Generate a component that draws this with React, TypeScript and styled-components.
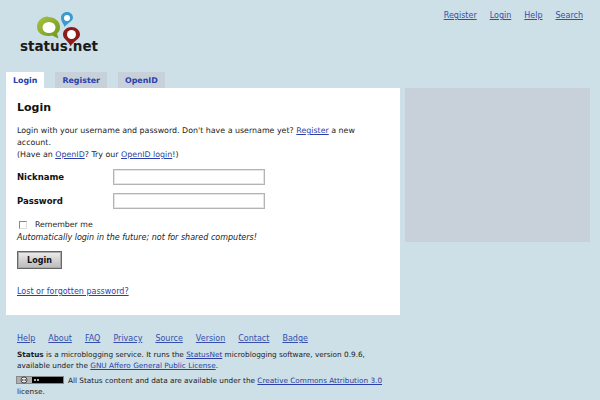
import React from "react";
import styled, { createGlobalStyle } from "styled-components";

const GlobalStyle = createGlobalStyle`
  html, body {
    margin: 0;
    padding: 0;
    background: #cddfe7;
  }
  body {
    width: 600px;
    height: 400px;
    overflow: hidden;
    font-family: "DejaVu Sans", sans-serif;
    font-size: 8px;
    line-height: 12px;
    color: #222;
  }
  a {
    color: #2a3fa8;
    text-decoration: underline;
  }
`;

const Page = styled.div`
  width: 600px;
  height: 400px;
  overflow: hidden;
`;

const Header = styled.header`
  height: 72px;
  display: flex;
  justify-content: space-between;
  align-items: flex-start;
  padding: 0 17px 0 20px;
`;

const LogoLink = styled.div`
  margin-top: 12px;
  width: 84px;
  height: 42px;
  display: flex;
  flex-direction: column;
  align-items: flex-start;
`;

const LogoText = styled.span`
  font-weight: 700;
  font-size: 13.5px;
  line-height: 14px;
  color: #1a1a1a;
  margin-top: -9px;
`;

const TopNav = styled.nav`
  margin-top: 10px;
  display: flex;
  gap: 13px;
  a {
    color: #3450ae;
  }
`;

const Tabs = styled.div`
  display: flex;
  gap: 11px;
  padding-left: 6px;
  height: 16px;
`;

const Tab = styled.a<{ $active?: boolean }>`
  display: block;
  height: 16px;
  padding: 0 7px;
  font-size: 7.9px;
  line-height: 17px;
  font-weight: 700;
  text-decoration: none;
  color: #2a3fa8;
  background: ${(p) => (p.$active ? "#fff" : "#c8d1d9")};
`;

const Columns = styled.div`
  display: flex;
  align-items: flex-start;
  gap: 5px;
  padding-left: 6px;
`;

const Main = styled.main`
  width: 394px;
  height: 227px;
  box-sizing: border-box;
  background: #fff;
  padding: 12px 11px 0;
`;

const Aside = styled.aside`
  width: 185px;
  height: 154px;
  background: #c8d1d9;
`;

const Title = styled.h1`
  margin: 0 0 9px;
  font-size: 11px;
  line-height: 16px;
  font-weight: 700;
  color: #111;
`;

const Intro = styled.p`
  margin: 0 0 8px;
  font-size: 7.9px;
`;

const FieldRow = styled.div`
  display: flex;
  align-items: center;
  height: 16px;
  margin-bottom: 8px;
`;

const FieldLabel = styled.label`
  width: 96px;
  font-size: 8.5px;
  font-weight: 700;
  color: #111;
`;

const TextInput = styled.input`
  width: 152px;
  height: 16px;
  box-sizing: border-box;
  border: 1px solid #b4b4b4;
  box-shadow: inset 0 0 0 1px #e4e4e4;
  background: #fff;
  padding: 0 2px;
  margin: 0;
`;

const CheckRow = styled.div`
  display: flex;
  align-items: center;
  height: 12px;
  margin-top: 10px;
  gap: 8px;
  padding-left: 2px;
  font-size: 7.8px;
`;

const CheckBox = styled.span`
  width: 6px;
  height: 6px;
  border-top: 1px solid #888;
  border-left: 1px solid #888;
  border-right: 1px solid #ddd;
  border-bottom: 1px solid #ddd;
`;

const Hint = styled.p`
  margin: 1px 0 0;
  font-style: italic;
`;

const SubmitButton = styled.button`
  display: block;
  width: 45px;
  height: 18px;
  margin: 7px 0 17px;
  padding: 0;
  box-sizing: border-box;
  border: 1px solid #666;
  box-shadow: inset 0 0 0 1px #aaa;
  background: linear-gradient(#eee, #d4d4d4 45%, #bbb);
  font-family: inherit;
  font-size: 8px;
  font-weight: 700;
  color: #111;
`;

const Footer = styled.footer`
  padding: 18px 17px 0;
`;

const FooterNav = styled.nav`
  display: flex;
  gap: 13px;
  margin-bottom: 4px;
  a {
    color: #3450ae;
  }
`;

const FooterText = styled.p`
  margin: 0 0 4px;
  width: 370px;
  font-size: 7.3px;
  line-height: 11px;
`;

const LicenseBadge = styled.svg`
  display: inline-block;
  width: 48px;
  height: 8px;
  margin: 0 4px 0 -1px;
  vertical-align: -1px;
`;

const Logo = () => (
  <svg width="62" height="36" viewBox="20 12 62 36" style={{ display: "block" }}>
    <defs>
      <linearGradient id="bubble" x1="0" y1="0" x2="1" y2="1">
        <stop offset="0" stopColor="#a8c43c" />
        <stop offset="1" stopColor="#6f9422" />
      </linearGradient>
    </defs>
    <path d="M48 17c7 0 12 4.500 12 10 0 3-1 5-3 6.500l1.500 5-6.500-3c-1.500.4-2.500.5-4 .5-5 0-11-3-11-9s5-10.500 11-10.500z" fill="url(#bubble)" />
    <ellipse cx="49" cy="27.500" rx="6.500" ry="5.500" fill="#fff" />
    <path d="M67 12c3.500 0 6 2.500 6 5.500 0 4-5 5-8.500 9.500 0-2-3.500-5-3.500-9.500 0-3 2.500-5.500 6-5.500z" fill="#3a9bd0" />
    <circle cx="67" cy="18" r="3" fill="#fff" />
    <path d="M71.500 27c4.700 0 8.500 3.200 8.500 7.500 0 5-6.500 6.500-9.500 12-1.500-5.500-7.500-7-7.500-12 0-4.300 3.800-7.500 8.500-7.500z" fill="#8c1c1c" />
    <circle cx="71.500" cy="34.500" r="4.500" fill="#fff" />
  </svg>
);

export default function App() {
  return (
    <Page>
      <GlobalStyle />
      <Header>
        <LogoLink>
          <Logo />
          <LogoText>status.net</LogoText>
        </LogoLink>
        <TopNav>
          <a href="#">Register</a>
          <a href="#">Login</a>
          <a href="#">Help</a>
          <a href="#">Search</a>
        </TopNav>
      </Header>
      <Tabs>
        <Tab $active href="#">Login</Tab>
        <Tab href="#">Register</Tab>
        <Tab href="#">OpenID</Tab>
      </Tabs>
      <Columns>
        <Main>
          <Title>Login</Title>
          <Intro>
            Login with your username and password. Don't have a username yet? <a href="#">Register</a> a new
            account.
            <br />
            (Have an <a href="#">OpenID</a>? Try our <a href="#">OpenID login</a>!)
          </Intro>
          <FieldRow>
            <FieldLabel>Nickname</FieldLabel>
            <TextInput />
          </FieldRow>
          <FieldRow>
            <FieldLabel>Password</FieldLabel>
            <TextInput type="password" />
          </FieldRow>
          <CheckRow>
            <CheckBox />
            <span>Remember me</span>
          </CheckRow>
          <Hint>Automatically login in the future; not for shared computers!</Hint>
          <SubmitButton>Login</SubmitButton>
          <a href="#">Lost or forgotten password?</a>
        </Main>
        <Aside />
      </Columns>
      <Footer>
        <FooterNav>
          <a href="#">Help</a>
          <a href="#">About</a>
          <a href="#">FAQ</a>
          <a href="#">Privacy</a>
          <a href="#">Source</a>
          <a href="#">Version</a>
          <a href="#">Contact</a>
          <a href="#">Badge</a>
        </FooterNav>
        <FooterText>
          <strong>Status</strong> is a microblogging service. It runs the <a href="#">StatusNet</a> microblogging software, version 0.9.6, available under the <a href="#">GNU Affero General Public License</a>.
        </FooterText>
        <FooterText>
          <LicenseBadge viewBox="0 0 48 8">
            <rect x="0.5" y="0.500" width="47" height="7" fill="#000" stroke="#888" />
            <rect x="1" y="1" width="15" height="6" fill="#b0b0b0" />
            <circle cx="8" cy="4" r="3" fill="#eee" stroke="#222" strokeWidth="0.8" />
            <rect x="6" y="3.400" width="1.500" height="1.200" fill="#222" />
            <rect x="8.500" y="3.400" width="1.500" height="1.200" fill="#222" />
            <rect x="18" y="3" width="2" height="2" fill="#aaa" />
            <rect x="21" y="3" width="2" height="2" fill="#aaa" />
          </LicenseBadge>
          All Status content and data are available under the <a href="#">Creative Commons Attribution 3.0</a> license.
        </FooterText>
      </Footer>
    </Page>
  );
}
